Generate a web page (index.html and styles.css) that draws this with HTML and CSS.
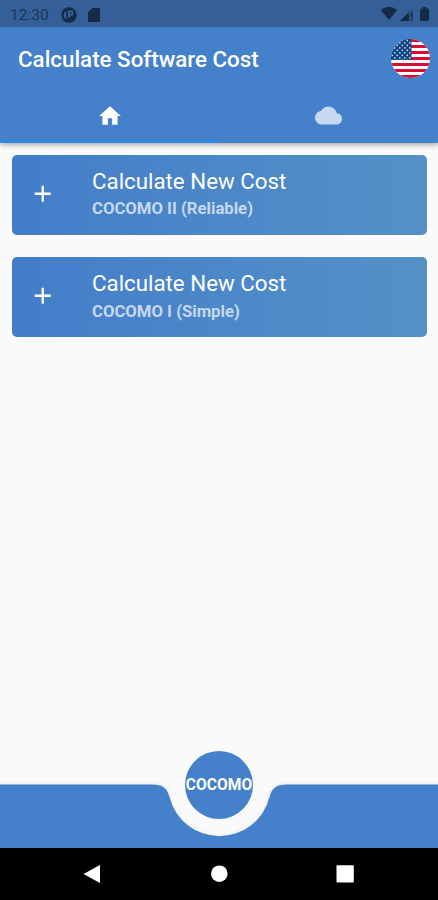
FILE: index.html
```html
<!DOCTYPE html>
<html lang="en">
<head>
<meta charset="utf-8">
<title>Calculate Software Cost</title>
<link rel="stylesheet" href="styles.css">
</head>
<body>
<div class="screen">
  <header class="appbar">
    <div class="status">
      <span class="clock">12:30</span>
      <svg class="status-app" viewBox="0 0 16 16"><circle cx="8" cy="8" r="7.700"/><path class="cut" d="M5.200 3.600v9A5.400 5.400 0 0 1 5.200 3.600zM6.800 3.600h5.400v5H9.400v2.200H6.800z"/><path d="M9 5.400h1.500v1.500H9z"/></svg>
      <svg class="status-sd" viewBox="0 0 12 14"><path d="M4.300 0H11a1 1 0 0 1 1 1v12a1 1 0 0 1-1 1H1a1 1 0 0 1-1-1V4.300z"/><path class="cut soft" d="M4 2.200h1v2.200H4zM6.300 2.200h1v2.200h-1zM8.600 2.200h1v2.200h-1z"/></svg>
      <span class="spacer"></span>
      <svg class="status-wifi" viewBox="0 0 16 13"><path d="M8 13 0 3.200C2 1.100 5 0 8 0s6 1.100 8 3.200z"/></svg>
      <svg class="status-signal" viewBox="0 0 13 13"><path d="M0 13 9 4v9z"/><path class="faint" d="M9 4l4-4v13H9z"/><path d="M11 5h1.600v4.500H11zM11 11.200h1.600V13H11z"/></svg>
      <svg class="status-battery" viewBox="0 0 9 14"><path d="M2.700 0h3.600v1.400H8a1 1 0 0 1 1 1V13a1 1 0 0 1-1 1H1a1 1 0 0 1-1-1V2.400a1 1 0 0 1 1-1h1.700z"/></svg>
    </div>
    <div class="toolbar">
      <h1>Calculate Software Cost</h1>
      <svg class="flag" viewBox="0 0 39 39">
        <defs>
          <clipPath id="round"><circle cx="19.500" cy="19.500" r="19.500"/></clipPath>
          <pattern id="stars" width="5" height="5" patternUnits="userSpaceOnUse"><circle cx="1.300" cy="1.300" r=".85" fill="#d3deee"/><circle cx="3.800" cy="3.800" r=".85" fill="#d3deee"/></pattern>
        </defs>
        <g clip-path="url(#round)">
          <path fill="#fff" d="M0 0h39v39H0z"/>
          <path stroke="#d80f32" stroke-width="3" d="M0 1.500h39M0 7.500h39M0 13.500h39M0 19.500h39M0 25.500h39M0 31.500h39M0 37.500h39"/>
          <path fill="#0d4585" d="M0 0h20.500v21H0z"/>
          <path fill="url(#stars)" d="M0 0h20.500v21H0z"/>
        </g>
      </svg>
    </div>
    <nav class="tabs">
      <div class="tab active"><svg class="home" viewBox="0 0 24 24"><path d="M10 20v-6h4v6h5v-8h3L12 3 2 12h3v8z"/></svg></div>
      <div class="tab"><svg class="cloud" viewBox="0 0 24 24"><path d="M19.350 10.040C18.670 6.590 15.640 4 12 4 9.110 4 6.600 5.640 5.350 8.040 2.340 8.360 0 10.910 0 14c0 3.310 2.690 6 6 6h13c2.760 0 5-2.240 5-5 0-2.640-2.050-4.780-4.650-4.960z"/></svg></div>
    </nav>
  </header>
  <main class="content">
    <div class="card">
      <svg class="plus" viewBox="0 0 24 24"><path d="M19 13h-6v6h-2v-6H5v-2h6V5h2v6h6z"/></svg>
      <div>
        <div class="card-title">Calculate New Cost</div>
        <div class="card-sub">COCOMO II (Reliable)</div>
      </div>
    </div>
    <div class="card">
      <svg class="plus" viewBox="0 0 24 24"><path d="M19 13h-6v6h-2v-6H5v-2h6V5h2v6h6z"/></svg>
      <div>
        <div class="card-title">Calculate New Cost</div>
        <div class="card-sub">COCOMO I (Simple)</div>
      </div>
    </div>
  </main>
  <footer class="bottom">
    <svg class="notch" viewBox="0 0 438 63"><path d="M0 -.5H152C163 -.5 167 3 169.500 12A51.500 51.500 0 0 0 269.500 12C272 3 276 -.5 287 -.5H438V64H0z"/></svg>
    <div class="fab">COCOMO</div>
  </footer>
  <div class="sysnav">
    <svg class="sys-icon" viewBox="0 0 18 20"><path d="M17 1v18L.500 10z"/></svg>
    <svg class="sys-icon" viewBox="0 0 18 20"><circle cx="9.300" cy="9.700" r="8.300"/></svg>
    <svg class="sys-icon" viewBox="0 0 18 20"><rect x=".500" y="1.300" width="17.300" height="17.300" rx="1"/></svg>
  </div>
</div>
</body>
</html>
```
FILE: styles.css
```css
* { box-sizing: border-box; }
body { margin: 0; font-family: Roboto, sans-serif; background: #fafafa; }
svg { display: block; flex: none; }
.screen { width: 438px; height: 900px; display: flex; flex-direction: column; overflow: hidden; background: #fafafa; }
.appbar { height: 143px; flex: none; background: #4580cb; box-shadow: 0 2px 5px rgba(0,0,0,.32); }
.status { height: 27px; display: flex; align-items: center; padding: 2px 9px 0 10px; background: #355f98; color: #1c3556; fill: #152a45; }
.clock { font-size: 15.500px; width: 51px; white-space: nowrap; }
.cut { fill: #355f98; }
.soft { opacity: .2; }
.faint { opacity: .3; }
.spacer { flex: 1; }
.status-app { width: 16px; height: 16px; }
.status-sd { width: 12px; height: 14px; margin-left: 11px; }
.status-wifi { width: 16px; height: 13px; margin: -2px 3px 0 0; }
.status-signal { width: 13px; height: 13px; margin: -1px 7px 0 0; }
.status-battery { width: 9px; height: 14px; margin-top: -2px; }
.toolbar { height: 63px; display: flex; align-items: center; justify-content: space-between; padding: 0 8px 0 18px; }
h1 { margin: 0; font-size: 22.350px; line-height: 28px; font-weight: 500; color: #fff; white-space: nowrap; }
.flag { width: 39px; height: 39px; }
.tabs { height: 53px; display: flex; }
.tab { flex: 1; display: flex; justify-content: center; align-items: center; border-bottom: 2px solid transparent; }
.active { border-color: #2190ec; }
.home { width: 26px; height: 26px; fill: #fff; }
.cloud { width: 27px; height: 27px; fill: #c7d9f0; }
.content { flex: 1; padding: 11.500px 11px 0 11.500px; display: flex; flex-direction: column; gap: 22.500px; }
.card { height: 80px; border-radius: 5px; display: flex; align-items: flex-start; padding: 13px 0 0 17.500px; background: linear-gradient(90deg, #437dca, #5591c7); color: #fff; }
.plus { width: 27.500px; height: 27.500px; margin: 12px 35.500px 0 0; fill: #fff; }
.card-title { font-size: 22.300px; line-height: 27px; white-space: nowrap; }
.card-sub { font-size: 16.700px; line-height: 20px; margin-top: 4.500px; font-weight: 700; color: #c5d8ef; white-space: nowrap; }
.bottom { height: 63px; flex: none; position: relative; }
.notch { width: 438px; height: 63px; overflow: visible; fill: #4580cb; filter: drop-shadow(0 0 2px rgba(0,0,0,.1)); }
.fab { position: absolute; left: 185px; top: -34.500px; width: 68px; height: 68px; border-radius: 50%; background: #4580cb; color: #fff; display: flex; align-items: center; justify-content: center; font-size: 15.600px; font-weight: 700; }
.sysnav { height: 52px; flex: none; position: relative; background: #000; display: flex; justify-content: space-between; align-items: center; padding: 0 84px 0 83px; fill: #fff; }
.sys-icon { width: 18px; height: 20px; }
```
